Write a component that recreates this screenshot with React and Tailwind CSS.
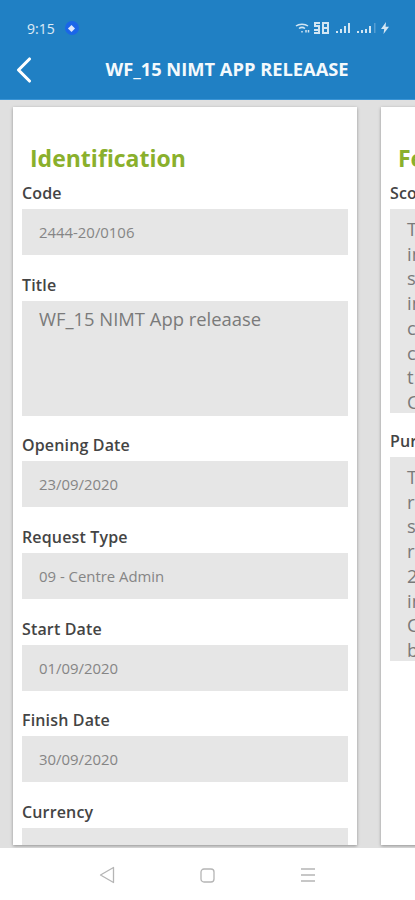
import React from 'react';
import { ChevronLeft } from 'lucide-react';

const font = 'font-["Open_Sans",sans-serif]';

const identification = [
  { label: 'Code', value: '2444-20/0106' },
  { label: 'Title', value: 'WF_15 NIMT App releaase', tall: true },
  { label: 'Opening Date', value: '23/09/2020' },
  { label: 'Request Type', value: '09 - Centre Admin' },
  { label: 'Start Date', value: '01/09/2020' },
  { label: 'Finish Date', value: '30/09/2020' },
  { label: 'Currency', value: '' },
];

const scopeLines = ['The', 'in', 's', 'in', 'c', 'c', 't', 'C'];
const purposeLines = ['The', 'r', 's', 'r', '2020', 'in', 'C', 'b'];

const Field = ({ label, value, tall }) => (
  <div className="mb-[13.7px]">
    <p className="text-[16px] leading-[32px] font-semibold tracking-[0.15px] text-[#444444] whitespace-nowrap">{label}</p>
    {tall ? (
      <div className="h-[115px] bg-[#e6e6e6] pl-[17px] pt-[4px] text-[18.4px] leading-[28px] text-[#7a7a7a]">{value}</div>
    ) : (
      <div className="h-[46px] bg-[#e6e6e6] pl-[17px] flex items-center text-[14.9px] text-[#858585]">{value}</div>
    )}
  </div>
);

const TextBlock = ({ label, lines }) => (
  <div className="mb-[12px]">
    <p className="text-[16px] leading-[32px] font-semibold tracking-[0.15px] text-[#444444] whitespace-nowrap">{label}</p>
    <div className="h-[204px] bg-[#e6e6e6] pl-[17px] pt-[8px] text-[18.4px] leading-[24.7px] text-[#7a7a7a]">
      {lines.map((line, i) => (
        <p key={i} className="whitespace-nowrap">{line}</p>
      ))}
    </div>
  </div>
);

const StatusIcons = () => (
  <div className="flex items-center gap-[4px] text-white/80">
    <svg width="15" height="10" viewBox="0 0 15 10" fill="none" stroke="currentColor" strokeWidth="1.5">
      <path d="M1 3 C4 0.5 10 0.5 13 3" />
      <path d="M4 5.5 C6 4 8 4 10 5.5" />
      <path d="M7 8v1.5M11 7v2.5M13.5 7v2.5" />
    </svg>
    <svg width="15" height="12" viewBox="0 0 15 12" fill="currentColor">
      <path d="M0 0h6v2H2v1h4v9H0v-2h4V9H0V7h4V5H0zM8 0h7v12H8zM10 2v3h3V2zm0 5v3h3V7z" />
    </svg>
    <svg width="17" height="12" viewBox="0 0 17 12" fill="currentColor" className="ml-[3px]">
      <rect x="0" y="9" width="2" height="2" />
      <rect x="4" y="7" width="2" height="4" />
      <rect x="8" y="4" width="2" height="7" />
      <rect x="12" y="1" width="2" height="10" />
    </svg>
    <svg width="19" height="12" viewBox="0 0 19 12" fill="currentColor">
      <rect x="0" y="9" width="2" height="2" />
      <rect x="4" y="8" width="2" height="3" />
      <rect x="8" y="7" width="2" height="4" />
      <rect x="12" y="4" width="2" height="7" />
      <rect x="17" y="1" width="1.5" height="10" opacity="0.3" />
    </svg>
    <svg width="8" height="12" viewBox="0 0 8 12" fill="currentColor" className="ml-[1px]">
      <path d="M5 0 L0 7 H3.2 L2.5 12 L8 4.8 H4.6 Z" />
    </svg>
  </div>
);

const App = () => {
  return (
    <div className={`w-[415px] h-[900px] flex flex-col overflow-hidden bg-[#e0e0e0] ${font}`}>
      <header className="h-[100px] shrink-0 bg-[#2080c4] border-b border-[#3b95d6]">
        <div className="h-[50px] pl-[27px] pr-[26px] pt-[6px] flex items-center justify-between">
          <div className="flex items-center gap-[10px] text-[14px] text-white/85">
            <span>9:15</span>
            <span className="w-[14px] h-[14px] rounded-full bg-[#1a66e8] flex items-center justify-center">
              <span className="w-[5px] h-[5px] rotate-45 bg-white/85" />
            </span>
          </div>
          <StatusIcons />
        </div>
        <div className="relative h-[38px] flex items-center justify-center">
          <ChevronLeft size={44} strokeWidth={1.7} className="absolute left-[2px] -top-[2px] text-white" />
          <h1 className="pl-[39px] text-[18.3px] font-bold text-[#f4f9fc] whitespace-nowrap">WF_15 NIMT APP RELEAASE</h1>
        </div>
      </header>

      <main className="flex-1 min-h-0 flex gap-[24px] pl-[13px] pt-[7px] pb-[3px] overflow-hidden">
        <section className="w-[344px] shrink-0 bg-white shadow-[0_1px_3px_rgba(0,0,0,0.35)] overflow-hidden px-[9px] pt-[33px]">
          <h2 className="pl-[8px] text-[23px] leading-[36px] font-bold text-[#8ab02c]">Identification</h2>
          <div className="mt-[1px]">
            {identification.map((field) => (
              <Field key={field.label} {...field} />
            ))}
          </div>
        </section>

        <section className="w-[344px] shrink-0 bg-white shadow-[0_1px_3px_rgba(0,0,0,0.35)] overflow-hidden px-[9px] pt-[33px]">
          <h2 className="pl-[8px] text-[23px] leading-[36px] font-bold text-[#8ab02c]">Feedback</h2>
          <div className="mt-[1px]">
            <TextBlock label="Scope" lines={scopeLines} />
            <TextBlock label="Purpose" lines={purposeLines} />
          </div>
        </section>
      </main>

      <nav className="h-[52px] shrink-0 bg-white flex items-center justify-center gap-[85px] pt-[2px]">
        <svg width="16" height="18" viewBox="0 0 16 18" fill="none" stroke="#b5b5b5" strokeWidth="1.3" strokeLinejoin="round">
          <path d="M14.5 1.5 L1.5 9 L14.5 16.5 Z" />
        </svg>
        <svg width="15" height="15" viewBox="0 0 15 15" fill="none" stroke="#b5b5b5" strokeWidth="1.3">
          <rect x="1" y="1" width="13" height="13" rx="3" />
        </svg>
        <svg width="16" height="14" viewBox="0 0 16 14" fill="none" stroke="#b5b5b5" strokeWidth="1.3">
          <path d="M1 1h14M1 7h14M1 13h14" />
        </svg>
      </nav>
    </div>
  );
};

export default App;
